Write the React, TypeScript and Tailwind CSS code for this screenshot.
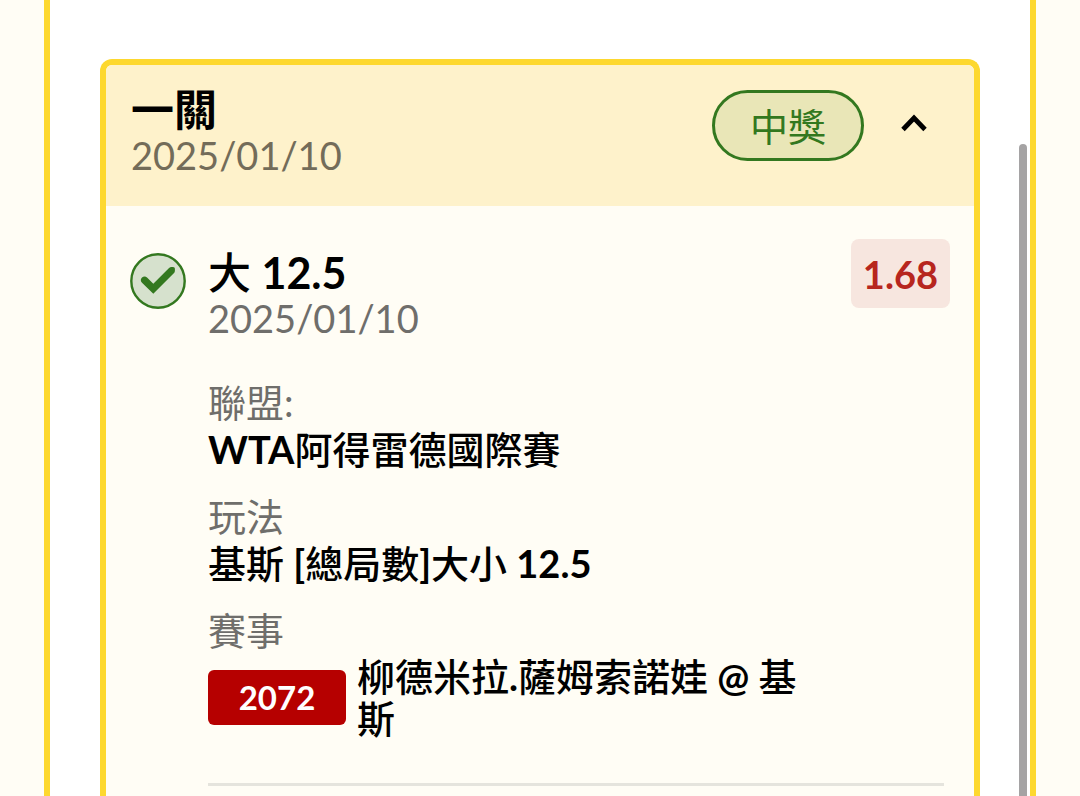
type Detail = { label: string; value: string };

const details: Detail[] = [
  { label: "聯盟:", value: "WTA阿得雷德國際賽" },
  { label: "玩法", value: "基斯 [總局數]大小 12.5" },
];

const strongText = "font-['Lato','Noto_Sans_CJK_TC_Medium','Noto_Sans_CJK_TC',sans-serif] font-bold";

function CheckBadge() {
  return (
    <svg viewBox="0 0 56 56" className="mt-[14px] size-14 shrink-0" aria-hidden="true">
      <circle cx="28" cy="28" r="26.7" fill="#d6e1cd" stroke="#33781f" strokeWidth="2.4" />
      <path
        d="M12 29.8C10.4 28.2 10.4 26.2 12 24.6C13.6 23 15.7 23.1 17.3 24.7L23.3 30.7L38.8 15.2C39.7 14.3 40.8 13.9 42 14H43C44.2 14 44.9 14.7 44.9 15.9V17.4C44.9 18.6 44.6 19.4 43.8 20.2L23.3 40.8Z"
        fill="#33781f"
      />
    </svg>
  );
}

function Chevron() {
  return (
    <svg viewBox="0 0 28 20" className="h-5 w-7" fill="none" aria-hidden="true">
      <path d="M3 17.5L14 6L25 17.5" stroke="#000" strokeWidth="4.8" />
    </svg>
  );
}

export default function App() {
  return (
    <div className="flex h-screen overflow-hidden bg-[#fffdf5] px-11 font-['Lato','Noto_Sans_CJK_TC',sans-serif] text-[38px] leading-[42px] text-black">
      <main className="relative flex min-w-0 flex-1 flex-col border-x-[6px] border-[#fdd82f] bg-white px-[50px] pt-[59px]">
        <section className="flex flex-1 flex-col rounded-t-xl border-x-[6px] border-t-[6px] border-[#fdd82f] bg-[#fffdf5]">
          <header className="flex h-[141px] shrink-0 items-start rounded-t-md bg-[#fef2cb] pt-[25px] pr-[34px] pl-[25px]">
            <div className="-mt-[2px] flex-1">
              <h1 className="text-[43px] leading-[44px] font-bold">一關</h1>
              <time className="block leading-[46px] text-[#736c59]">2025/01/10</time>
            </div>
            <span className="flex h-[71px] items-center rounded-full border-[3px] border-[#33781f] bg-[#e9e6b7] px-[35px] text-[#33781f]">
              中獎
            </span>
            <button type="button" aria-label="收合" className="ml-6 flex h-16 w-[52px] items-center justify-center">
              <Chevron />
            </button>
          </header>

          <article className="flex items-start px-6 pt-[33px]">
            <CheckBadge />
            <div className="ml-[22px] min-w-0 flex-1">
              <div className="flex items-start">
                <div className="flex-1 pt-3">
                  <h2 className={`${strongText} text-[43px] leading-[44px]`}>大 12.5</h2>
                  <time className="block leading-[46px] text-[#6f6e6b]">2025/01/10</time>
                </div>
                <span className="flex h-[69px] items-center rounded-lg bg-[#f7e6df] px-3 font-bold text-[#b7261e]">
                  1.68
                </span>
              </div>

              <dl className="mr-[6px] border-b-[3px] border-[#e5e4dd] pt-[38px] pb-11">
                {details.map((item) => (
                  <div key={item.label} className="mb-5">
                    <dt className="leading-[46px] text-[#6f6e6b]">{item.label}</dt>
                    <dd className={`${strongText} leading-[48px]`}>{item.value}</dd>
                  </div>
                ))}
                <div>
                  <dt className="leading-[46px] text-[#6f6e6b]">賽事</dt>
                  <dd className={`${strongText} mt-[2px] flex items-center`}>
                    <span className="flex h-[55px] w-[138px] shrink-0 items-center justify-center rounded-md bg-[#b60000] text-[33px] text-white">
                      2072
                    </span>
                    <span className="ml-[11px] max-w-[450px]">柳德米拉.薩姆索諾娃 @ 基斯</span>
                  </dd>
                </div>
              </dl>
            </div>
          </article>
        </section>
        <div className="absolute top-36 right-[3px] bottom-0 w-2 rounded-t-full bg-[#a5a3a4]" />
      </main>
    </div>
  );
}
